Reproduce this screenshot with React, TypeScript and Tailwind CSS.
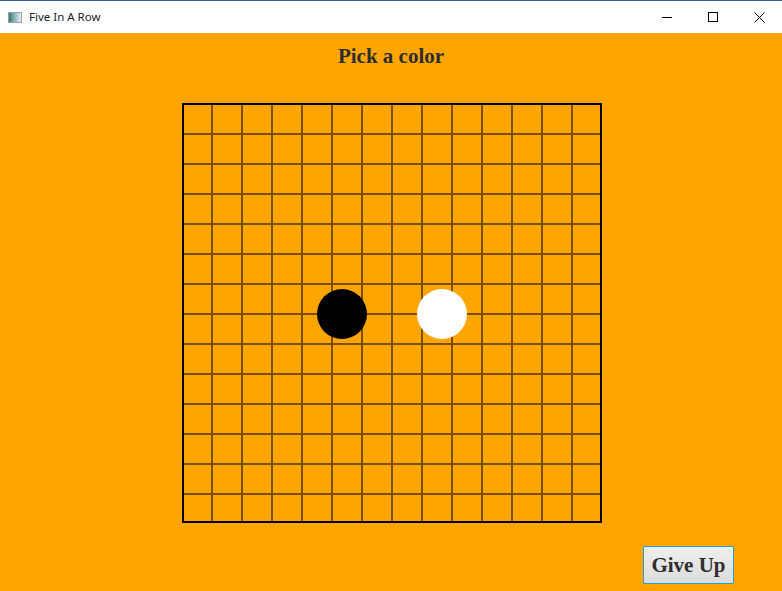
const SIZE = 14;

function TitleBar() {
  return (
    <div className="h-[33px] bg-white border-t border-[#3b5f8a] flex items-center shrink-0">
      <div className="ml-[8px] w-[14px] h-[11px] border border-[#9aa3a8] bg-gradient-to-r from-[#2f7c6a] via-[#8fb8c4] to-[#e6eef0]" />
      <span className="ml-[7px] text-[11.5px] text-[#1a1a2e] font-['Noto_Sans',sans-serif] leading-none">
        Five In A Row
      </span>
      <div className="ml-auto flex items-center h-full">
        <div className="w-[46px] h-full flex items-center justify-center">
          <svg width="10" height="10" viewBox="0 0 10 10">
            <path d="M0 5.5h10" stroke="#000" strokeWidth="1" />
          </svg>
        </div>
        <div className="w-[46px] h-full flex items-center justify-center">
          <svg width="10" height="10" viewBox="0 0 10 10">
            <rect x="0.5" y="0.5" width="9" height="9" fill="none" stroke="#000" strokeWidth="1" />
          </svg>
        </div>
        <div className="w-[46px] h-full flex items-center justify-center">
          <svg width="11" height="11" viewBox="0 0 11 11">
            <path d="M0.5 0.5l10 10M10.5 0.5l-10 10" stroke="#000" strokeWidth="1" />
          </svg>
        </div>
      </div>
    </div>
  );
}

function Board() {
  const cells = Array.from({ length: SIZE * SIZE }, (_, i) => i);
  return (
    <div className="relative ml-[182px] w-[420px] h-[420px] border-2 border-black">
      <div className="grid grid-cols-[29px_repeat(12,30px)_1fr] grid-rows-[repeat(13,30px)_1fr] w-full h-full">
        {cells.map((i) => {
          const col = i % SIZE;
          const row = Math.floor(i / SIZE);
          return (
            <div
              key={i}
              className={
                "border-[#7a4f00] " +
                (col < SIZE - 1 ? "border-r-2 " : "") +
                (row < SIZE - 1 ? "border-b-2" : "")
              }
            />
          );
        })}
      </div>
      <div className="absolute left-[133px] top-[184px] w-[50px] h-[50px] rounded-full bg-black" />
      <div className="absolute left-[233px] top-[184px] w-[50px] h-[50px] rounded-full bg-white" />
    </div>
  );
}

export default function App() {
  return (
    <div className="w-[782px] h-[591px] flex flex-col overflow-hidden">
      <TitleBar />
      <div className="flex-1 bg-[#ffa500] flex flex-col">
        <h1 className="mt-[11px] text-center text-[21px] leading-[24px] font-bold text-[#2e2e2e] font-['Liberation_Serif',serif]">
          Pick a color
        </h1>
        <div className="mt-[35px]">
          <Board />
        </div>
        <div className="mt-[23px] flex justify-end pr-[48px]">
          <button className="w-[91px] h-[38px] rounded-[2px] border border-[#1fa0d8] bg-gradient-to-b from-[#efefef] to-[#dcdcdc] text-[21px] font-bold text-[#2e2e2e] font-['Liberation_Serif',serif] leading-none">
            Give Up
          </button>
        </div>
      </div>
    </div>
  );
}
